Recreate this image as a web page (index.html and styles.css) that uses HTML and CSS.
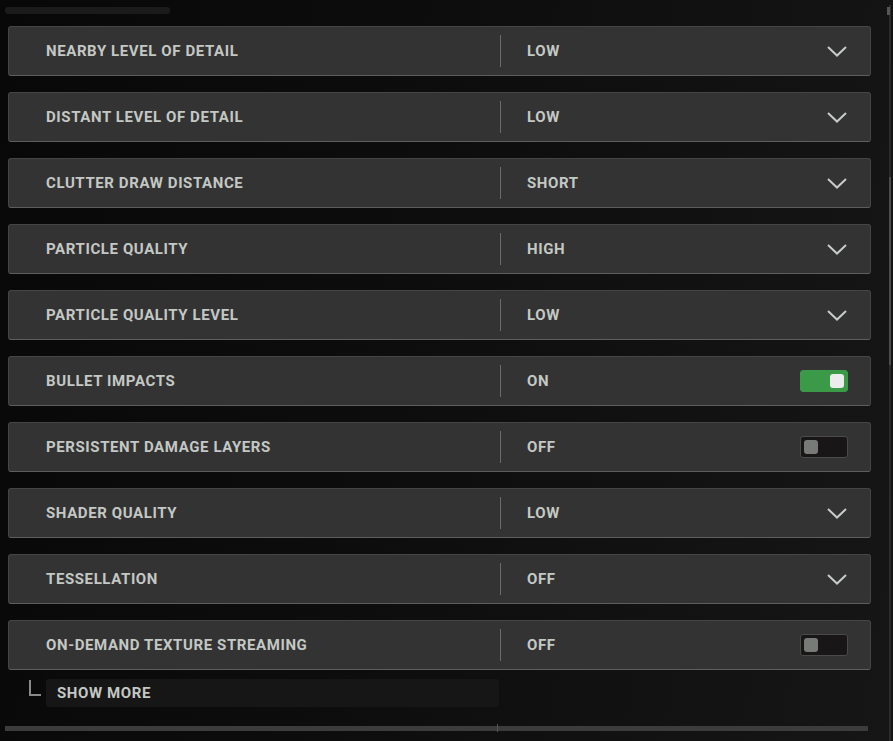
FILE: index.html
```html
<!DOCTYPE html>
<html lang="en">
<head>
    <meta charset="UTF-8">
    <meta name="viewport" content="width=device-width, initial-scale=1.0">
    <title>Graphics Settings</title>
    <link rel="stylesheet" href="styles.css">
</head>
<body>

<div class="page">
    <div class="top-bar"></div>

    <div class="settings">
        <!-- dropdown rows -->
        <div class="setting">
            <span class="label">Nearby Level of Detail</span>
            <span class="divider"></span>
            <span class="value">Low</span>
            <span class="chevron"><svg width="20" height="11" viewBox="0 0 20 11"><path d="M1 1 L10 9.5 L19 1" fill="none" stroke="#c8ccc8" stroke-width="2"/></svg></span>
        </div>
        <div class="setting">
            <span class="label">Distant Level of Detail</span>
            <span class="divider"></span>
            <span class="value">Low</span>
            <span class="chevron"><svg width="20" height="11" viewBox="0 0 20 11"><path d="M1 1 L10 9.5 L19 1" fill="none" stroke="#c8ccc8" stroke-width="2"/></svg></span>
        </div>
        <div class="setting">
            <span class="label">Clutter Draw Distance</span>
            <span class="divider"></span>
            <span class="value">Short</span>
            <span class="chevron"><svg width="20" height="11" viewBox="0 0 20 11"><path d="M1 1 L10 9.5 L19 1" fill="none" stroke="#c8ccc8" stroke-width="2"/></svg></span>
        </div>
        <div class="setting">
            <span class="label">Particle Quality</span>
            <span class="divider"></span>
            <span class="value">High</span>
            <span class="chevron"><svg width="20" height="11" viewBox="0 0 20 11"><path d="M1 1 L10 9.5 L19 1" fill="none" stroke="#c8ccc8" stroke-width="2"/></svg></span>
        </div>
        <div class="setting">
            <span class="label">Particle Quality Level</span>
            <span class="divider"></span>
            <span class="value">Low</span>
            <span class="chevron"><svg width="20" height="11" viewBox="0 0 20 11"><path d="M1 1 L10 9.5 L19 1" fill="none" stroke="#c8ccc8" stroke-width="2"/></svg></span>
        </div>

        <!-- toggles -->
        <div class="setting">
            <span class="label">Bullet Impacts</span>
            <span class="divider"></span>
            <span class="value">On</span>
            <span class="toggle on"><span class="knob"></span></span>
        </div>
        <div class="setting">
            <span class="label">Persistent Damage Layers</span>
            <span class="divider"></span>
            <span class="value">Off</span>
            <span class="toggle"><span class="knob"></span></span>
        </div>

        <div class="setting">
            <span class="label">Shader Quality</span>
            <span class="divider"></span>
            <span class="value">Low</span>
            <span class="chevron"><svg width="20" height="11" viewBox="0 0 20 11"><path d="M1 1 L10 9.5 L19 1" fill="none" stroke="#c8ccc8" stroke-width="2"/></svg></span>
        </div>
        <div class="setting">
            <span class="label">Tessellation</span>
            <span class="divider"></span>
            <span class="value">Off</span>
            <span class="chevron"><svg width="20" height="11" viewBox="0 0 20 11"><path d="M1 1 L10 9.5 L19 1" fill="none" stroke="#c8ccc8" stroke-width="2"/></svg></span>
        </div>
        <div class="setting">
            <span class="label">On-Demand Texture Streaming</span>
            <span class="divider"></span>
            <span class="value">Off</span>
            <span class="toggle"><span class="knob"></span></span>
        </div>
    </div>

    <div class="show-more">
        <span class="bracket"></span>
        <button class="show-more-btn" type="button">Show More</button>
    </div>

    <div class="bottom-bar"><span class="tick"></span></div>

    <div class="scrollbar"><span class="cap"></span><span class="thumb"></span></div>
</div>

</body>
</html>
```

FILE: styles.css
```css
body {
    margin: 0;
    padding: 0;
    background: #0b0b0b;
    font-family: Roboto, "Liberation Sans", sans-serif;
    color: #c4c8c4;
    overflow: hidden;
}
.page {
    position: relative;
    width: 893px;
    height: 741px;
    box-sizing: border-box;
    padding: 7px 22px 0 5px;
    background: linear-gradient(100deg, #080808 0%, #0d0d0d 45%, #161616 100%);
}
.top-bar {
    width: 165px;
    height: 7px;
    border-radius: 3px;
    background: #1b1b1b;
}
.settings {
    display: flex;
    flex-direction: column;
    gap: 16px;
    margin: 12px 0 0 3px;
}
.setting {
    display: flex;
    align-items: center;
    height: 48px;
    box-sizing: content-box;
    background: #333333;
    border: 1px solid #454545;
    border-bottom-color: #5e5e5e;
    border-radius: 3px;
    text-transform: uppercase;
    font-weight: 700;
    font-size: 15px;
    letter-spacing: 0.6px;
}
.label {
    width: 491px;
    padding-left: 37px;
    box-sizing: border-box;
}
.divider {
    width: 1px;
    height: 32px;
    background: #6a6a6a;
}
.value {
    flex: 1;
    padding-left: 26px;
}
.chevron {
    display: flex;
    width: 20px;
    margin-right: 23px;
}
.toggle {
    position: relative;
    width: 46px;
    height: 20px;
    margin-right: 22px;
    border: 1px solid #4a4a4a;
    border-radius: 3px;
    background: #181616;
}
.toggle .knob {
    position: absolute;
    left: 3px;
    top: 3px;
    width: 14px;
    height: 14px;
    border-radius: 3px;
    background: #777a77;
}
.toggle.on {
    background: #3a9a48;
    border-color: #3a9a48;
}
.toggle.on .knob {
    left: auto;
    right: 3px;
    background: #ececec;
}
.show-more {
    display: flex;
    align-items: flex-start;
    margin: 9px 0 0 24px;
}
.bracket {
    width: 10px;
    height: 14px;
    margin-top: 1px;
    border-left: 2px solid #8a8a8a;
    border-bottom: 2px solid #8a8a8a;
}
.show-more-btn {
    width: 453px;
    height: 28px;
    margin-left: 5px;
    padding: 0 0 0 11px;
    text-align: left;
    border: none;
    border-radius: 3px;
    background: #161616;
    color: #c4c8c4;
    font-family: inherit;
    font-weight: 700;
    font-size: 15px;
    letter-spacing: 0.6px;
    text-transform: uppercase;
}
.bottom-bar {
    position: relative;
    width: 863px;
    height: 5px;
    margin-top: 19px;
    background: #3c3c3c;
}
.bottom-bar .tick {
    position: absolute;
    left: 492px;
    top: -2px;
    width: 1px;
    height: 8px;
    background: #555;
}
.scrollbar {
    position: absolute;
    top: 5px;
    right: 2px;
    bottom: 0;
    width: 2px;
    background: #2a2a2a;
}
.scrollbar .cap {
    position: absolute;
    top: 2px;
    left: -2px;
    width: 3px;
    height: 8px;
    background: #555;
}
.scrollbar .thumb {
    position: absolute;
    top: 172px;
    left: 0;
    width: 2px;
    height: 188px;
    background: #4c4c4c;
}
```
